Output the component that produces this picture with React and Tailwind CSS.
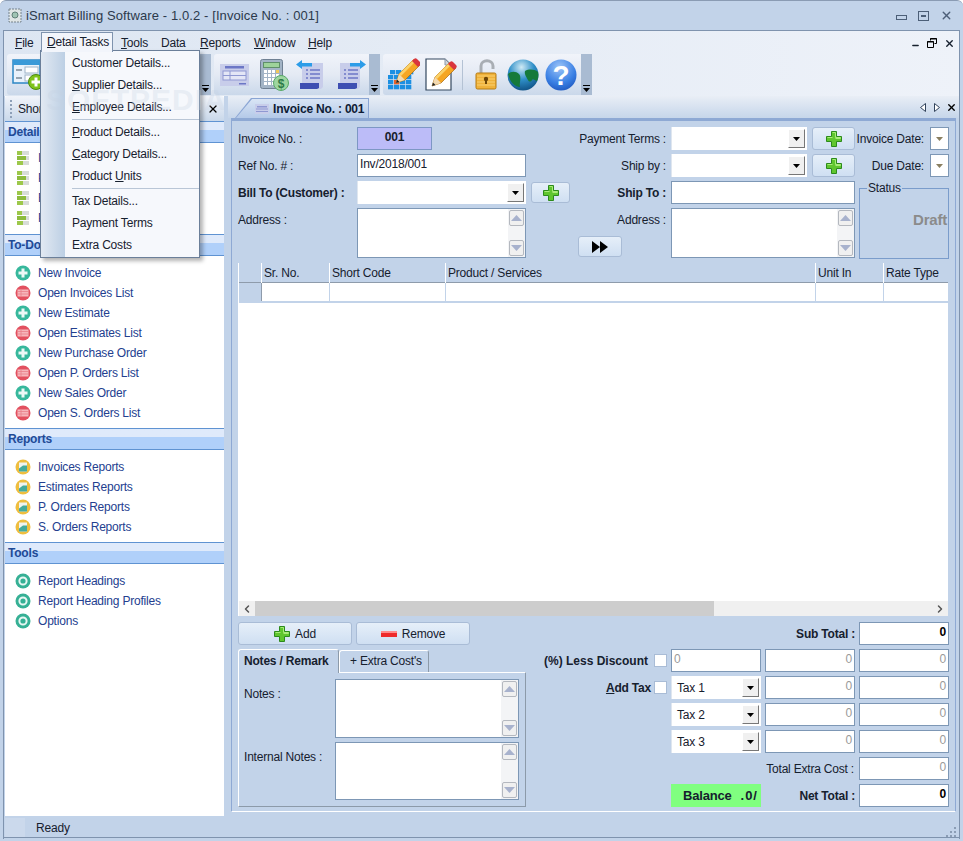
import React from 'react';
import { X, Minus, ChevronLeft, ChevronRight } from 'lucide-react';

const todoLinks = [
    ['plus', 'New Invoice'], ['list', 'Open Invoices List'],
    ['plus', 'New Estimate'], ['list', 'Open Estimates List'],
    ['plus', 'New Purchase Order'], ['list', 'Open P. Orders List'],
    ['plus', 'New Sales Order'], ['list', 'Open S. Orders List'],
];
const reportLinks = ['Invoices Reports', 'Estimates Reports', 'P. Orders Reports', 'S. Orders Reports'];
const toolLinks = ['Report Headings', 'Report Heading Profiles', 'Options'];
const detailLinks = ['Invoice Details', 'Product Details', 'Estimate Details', 'Payment Details'];

const inputCls = 'h-[23px] border border-[#7d97b5] bg-white text-[12px] leading-[18px] px-[2px]';
const btnCls = 'flex items-center justify-center rounded-[3px] border border-[#a9bcd6] bg-linear-to-b from-[#e6eff9] to-[#cfdff2]';

// ---- icons ----
const GreenPlus = ({ size = 16 }) => (
    <svg width={size} height={size} viewBox="0 0 16 16">
        <path d="M5.5 0.5h5v5h5v5h-5v5h-5v-5h-5v-5h5z" fill="#5fc62e" stroke="#2c8a1c" />
        <path d="M6.5 1.5h3v5h5v1h-5M1.5 6.5h5" fill="none" stroke="#a8ec78" />
    </svg>
);

const SideIcon = ({ kind }) => {
    if (kind === 'plus') return (
        <svg width="16" height="16" viewBox="0 0 16 16">
            <circle cx="8" cy="8" r="7.5" fill="#37b89c" />
            <path d="M6.5 3.5h3v3h3v3h-3v3h-3v-3h-3v-3h3z" fill="#eef9f6" />
        </svg>
    );
    if (kind === 'list') return (
        <svg width="16" height="16" viewBox="0 0 16 16">
            <circle cx="8" cy="8" r="7.5" fill="#e2505f" />
            <rect x="2.5" y="4.5" width="11" height="7" fill="#f6b6bb" />
            <path d="M2.5 6.5h11M2.5 9h11M6 4.5v7" stroke="#ea7f89" strokeWidth="0.8" />
        </svg>
    );
    if (kind === 'report') return (
        <svg width="16" height="16" viewBox="0 0 16 16">
            <circle cx="8" cy="8" r="7.5" fill="#efbe3e" />
            <rect x="4" y="3.5" width="8" height="9" fill="#f1f4ee" />
            <path d="M4 12.5v-3l4-3 4 0v6z" fill="#46ab9c" />
        </svg>
    );
    if (kind === 'gear') return (
        <svg width="16" height="16" viewBox="0 0 16 16">
            <circle cx="8" cy="8" r="7.5" fill="#36b095" />
            <circle cx="8" cy="8" r="3.6" fill="none" stroke="#e8f7f3" strokeWidth="2" />
            <circle cx="8" cy="8" r="1.5" fill="#36b095" />
        </svg>
    );
    return (
        <svg width="13" height="14" viewBox="0 0 13 14">
            <rect x="0" y="0" width="5" height="4" fill="#9dc84a" /><rect x="5" y="0" width="7" height="4" fill="#d8dcd8" />
            <rect x="0" y="5" width="9" height="4" fill="#8dbb3e" /><rect x="9" y="5" width="3" height="4" fill="#d8dcd8" />
            <rect x="0" y="10" width="6" height="4" fill="#9dc84a" /><rect x="6" y="10" width="6" height="4" fill="#d8dcd8" />
        </svg>
    );
};

const ComboArrow = () => (
    <span className="flex h-[19px] w-[17px] items-center justify-center border border-t-white border-l-white border-r-[#777] border-b-[#777] bg-[#f0f0f0]">
        <svg width="7" height="4" viewBox="0 0 7 4"><path d="M0 0h7L3.5 4z" fill="#000" /></svg>
    </span>
);

const Pencil = () => (
    <g>
        <path d="M8 28l3-9 15-15 6 6-15 15z" fill="#f5a623" stroke="#a86a10" strokeWidth="0.7" />
        <path d="M11 19l15-15 2 2-15 15z" fill="#fbd26a" />
        <path d="M24 6l2-2c1-1 2-1 3 0l3 3c1 1 1 2 0 3l-2 2z" fill="#d9363e" />
        <path d="M8 28l3-9 6 6z" fill="#f3d9b0" />
        <path d="M8 28l1-3.5 2.500 2.500z" fill="#222" />
    </g>
);

const ToolIcons = {
    newForm: (
        <svg width="34" height="32" viewBox="0 0 34 32">
            <rect x="1" y="1" width="27" height="23" fill="#e9f2fb" stroke="#2c86c4" strokeWidth="1.500" />
            <rect x="1" y="1" width="27" height="5" fill="#3a9ad8" />
            <rect x="13" y="8" width="13" height="6" fill="#fff" stroke="#9fb4c8" />
            <rect x="13" y="16" width="13" height="6" fill="#fff" stroke="#9fb4c8" />
            <path d="M4 11h6M4 19h6" stroke="#7c8b98" strokeWidth="1.500" />
            <circle cx="24" cy="23" r="7.500" fill="#7fc31c" stroke="#4d8a10" />
            <path d="M22.500 18.500h3v3h3v3h-3v3h-3v-3h-3v-3h3z" fill="#fff" />
        </svg>
    ),
    form: (
        <svg width="29" height="22" viewBox="0 0 29 22">
            <rect width="29" height="22" fill="#c8cdea" />
            <rect x="5" y="2" width="19" height="2.500" fill="#6c77c6" />
            <rect x="3" y="7" width="23" height="9" fill="#e4e6f6" stroke="#8f98d2" />
            <path d="M3 11.500h23M10 7v9" stroke="#8f98d2" />
            <rect x="19" y="19" width="7" height="1.500" fill="#6c77c6" />
        </svg>
    ),
    calc: (
        <svg width="29" height="32" viewBox="0 0 29 32">
            <rect x="0.500" y="0.500" width="22" height="29" rx="2" fill="#a3b4c6" stroke="#6f8093" />
            <rect x="3.500" y="3.500" width="16" height="5" fill="#9ed39a" stroke="#5f8f6a" />
            {[11, 15, 19, 23].map((y) => [4, 8, 12, 16].map((x) => (
                <rect key={`${x}-${y}`} x={x} y={y} width="3" height="3" fill={x === 16 && y === 11 ? '#f0c85a' : '#fff'} />
            )))}
            <circle cx="21" cy="24" r="7.500" fill="#9ed6a0" stroke="#58a868" />
            <text x="21" y="28.500" textAnchor="middle" fontSize="12" fontWeight="700" fill="#2c7a48" fontFamily="Liberation Sans, sans-serif">$</text>
        </svg>
    ),
    docLeft: (
        <svg width="28" height="30" viewBox="0 0 28 30">
            <path d="M6 3h21v24l-2 2H6z" fill="#c8cdea" />
            <path d="M10 10h2M14 10h10M10 14h2M14 14h10M10 18h2M14 18h10" stroke="#6c77c6" strokeWidth="1.600" />
            <path d="M4 23h19v5l-2 1H4z" fill="#3e4eb2" />
            <path d="M0 4.500L6 0v3h10v3.500H6V9z" fill="#2c9ce8" />
        </svg>
    ),
    docRight: (
        <svg width="28" height="30" viewBox="0 0 28 30">
            <path d="M2 3h20v24l-2 2H2z" fill="#c8cdea" />
            <path d="M6 10h2M10 10h10M6 14h2M10 14h10M6 18h2M10 18h10" stroke="#6c77c6" strokeWidth="1.600" />
            <path d="M0 23h19v5l-2 1H0z" fill="#3e4eb2" />
            <path d="M28 4.500L22 0v3H12v3.500h10V9z" fill="#2c9ce8" />
        </svg>
    ),
    gridPencil: (
        <svg width="32" height="33" viewBox="0 0 32 33">
            {[12, 17, 22, 27].map((y) => [0, 6, 12, 18].map((x) => (
                <rect key={`${x}-${y}`} x={x + (y === 12 ? 2 : 0)} y={y} width="5.300" height="4.300" fill="#1b8fe2" />
            )))}
            <rect x="6" y="22" width="5.300" height="4.300" fill="#e8622c" />
            <g transform="translate(0 -3)"><Pencil /></g>
        </svg>
    ),
    docPencil: (
        <svg width="32" height="33" viewBox="0 0 32 33">
            <path d="M1 1h19l6 6v25H1z" fill="#fff" stroke="#33475e" strokeWidth="1.200" />
            <path d="M20 1v6h6" fill="#cfd6de" stroke="#8b98a8" />
            <g transform="translate(-1 0)"><Pencil /></g>
        </svg>
    ),
    lock: (
        <svg width="22" height="31" viewBox="0 0 22 31">
            <path d="M6 15V7c0-7 12-7 12 0v3" fill="none" stroke="#a9aeb4" strokeWidth="3" />
            <rect x="1" y="14" width="20" height="16" rx="1.500" fill="#f0b23a" stroke="#b47a12" />
            <path d="M2 17h18M2 20h18M2 23h18M2 26h18" stroke="#f8d072" />
            <circle cx="11" cy="20" r="2.200" fill="#6d4506" />
            <rect x="10" y="20" width="2" height="5" fill="#6d4506" />
        </svg>
    ),
    globe: (
        <svg width="32" height="32" viewBox="0 0 32 32">
            <defs>
                <radialGradient id="sea" cx="45%" cy="25%" r="80%">
                    <stop offset="0" stopColor="#cfeaf5" /><stop offset="0.5" stopColor="#2f8fc8" /><stop offset="1" stopColor="#0d4d80" />
                </radialGradient>
            </defs>
            <circle cx="16" cy="16" r="15.500" fill="url(#sea)" />
            <path d="M1 15c3-3 8-3 11 0s0 9 1 13C8 28 3 23 1 15zM18 12c4-2 9-2 13 1 1 4 0 7-1 9-2 0-4-3-5-1s-3 2-4 0-4-6-3-9z" fill="#157a3a" />
        </svg>
    ),
    help: (
        <svg width="32" height="32" viewBox="0 0 32 32">
            <defs>
                <radialGradient id="blueball" cx="45%" cy="25%" r="85%">
                    <stop offset="0" stopColor="#9cc4f8" /><stop offset="0.6" stopColor="#3a80e4" /><stop offset="1" stopColor="#1a50b8" />
                </radialGradient>
            </defs>
            <circle cx="16" cy="16" r="15.500" fill="url(#blueball)" />
            <text x="16" y="26" textAnchor="middle" fontSize="28" fontWeight="700" fill="#fff" fontFamily="Liberation Sans, sans-serif">?</text>
        </svg>
    ),
};

// ---- small pieces ----
const U = ({ children }) => <span className="underline">{children}</span>;

const Toolbar = ({ className, children }) => (
    <div className={`flex h-[41px] ${className}`}>
        <div className="flex min-w-0 flex-1 items-center rounded-l-[3px] bg-linear-to-b from-[#f1f4fa] via-[#e4eaf4] to-[#cad8ea]">{children}</div>
        <div className="flex w-[11px] flex-col items-center justify-end bg-[#a9bbd2] pb-[3px]">
            <svg width="7" height="7" viewBox="0 0 7 7"><path d="M0 0h7v1H0zM0 3h7L3.500 7z" fill="#000" /></svg>
        </div>
    </div>
);

const Combo = ({ value, className = '' }) => (
    <div className={`flex h-[23px] items-center justify-between border-l border-[#dfe6ef] bg-white pr-[2px] text-[12px] ${className}`}>
        <span className="pl-[5px]">{value}</span>
        <ComboArrow />
    </div>
);

const ScrollArea = ({ className = '' }) => (
    <div className={`flex justify-end border border-[#7d97b5] bg-white ${className}`}>
        <div className="flex w-[17px] flex-col justify-between bg-[#f3f4f6] p-[1px]">
            {['M0 6L5.500 0 11 6z', 'M0 0h11L5.500 6z'].map((d) => (
                <span key={d} className="flex h-[16px] w-[15px] items-center justify-center rounded-[2px] border border-[#b4b8bf] bg-[#f0f0f0]">
                    <svg width="11" height="6" viewBox="0 0 11 6"><path d={d} fill="#a8b2cd" /></svg>
                </span>
            ))}
        </div>
    </div>
);

const SectionHead = ({ title }) => (
    <div className="relative h-[22px] border-y border-[#5f93d2] bg-linear-to-b from-[#dfeafb] from-40% to-[#b0d0fa] to-40% pl-[3px] text-[12px] font-bold leading-[21px] text-[#1f4a96]">
        {title}
    </div>
);

const SideLink = ({ kind, label }) => (
    <div className="flex h-[20px] items-center gap-[7px] pl-[10px] text-[12px] text-[#23408f]">
        <span className="flex w-[16px] justify-center"><SideIcon kind={kind} /></span>
        {label}
    </div>
);

const Num = ({ value = '0', strong }) => (
    <div className={`${inputCls} text-right ${strong ? 'font-bold text-black' : 'text-[#9a9a9a]'}`}>{value}</div>
);

const Check = () => <span className="h-[13px] w-[13px] border border-[#a9bcd6] bg-white" />;

const App = () => {
    return (
        <div className="relative flex h-[841px] w-[963px] flex-col overflow-hidden rounded-t-[6px] border-t border-[#8a9bb3] bg-[#c2d3e9] font-['Liberation_Sans',sans-serif] tracking-[-0.2px] text-[#16202e]">
            {/* title bar */}
            <div className="flex h-[29px] shrink-0 items-center pl-[8px] pr-[10px]">
                <svg width="14" height="15" viewBox="0 0 14 15">
                    <rect x="1" y="1" width="12" height="13" fill="#dfe5e6" stroke="#77838c" strokeDasharray="2 1" />
                    <circle cx="7" cy="7" r="3" fill="#9fc4b4" stroke="#5f7f78" />
                </svg>
                <span className="ml-[4px] text-[13px] tracking-[0.1px] text-[#2c3a4c]">iSmart Billing Software - 1.0.2 - [Invoice No. : 001]</span>
                <div className="ml-auto flex items-center gap-[11px] text-[#4c5f78]">
                    <span className="mt-[4px] h-[5px] w-[11px] border border-[#4c5f78]" />
                    <span className="flex h-[10px] w-[11px] items-center justify-center border border-[#4c5f78]"><span className="h-[2px] w-[5px] border border-[#4c5f78]" /></span>
                    <X size={13} strokeWidth={2.500} />
                </div>
            </div>

            <div className="mx-[3px] flex h-[809px] flex-col border-x border-t border-[#7f93ae]">
                {/* menu + toolbars */}
                <div className="h-[65px] shrink-0 bg-linear-to-r from-[#dde6f2] to-[#eef2f9]">
                    <div className="flex h-[23px] items-center pl-[11px] text-[12px]">
                        <span className="w-[32px]"><U>F</U>ile</span>
                        <span className="w-[74px]"><U>D</U>etail Tasks</span>
                        <span className="w-[40px]"><U>T</U>ools</span>
                        <span className="w-[39px]">Data</span>
                        <span className="w-[54px]"><U>R</U>eports</span>
                        <span className="w-[54px]"><U>W</U>indow</span>
                        <span><U>H</U>elp</span>
                        <div className="ml-auto flex items-center gap-[7px] pr-[4px] pt-[1px]">
                            <Minus size={9} strokeWidth={4} className="mt-[5px]" />
                            <svg width="10" height="10" viewBox="0 0 10 10">
                                <path d="M3.500 2.500V0.500h6v5h-2M0.500 3.500h6v6h-6z" fill="none" stroke="#000" />
                                <path d="M3 1h7M0 4h7" stroke="#000" />
                            </svg>
                            <X size={11} strokeWidth={3} />
                        </div>
                    </div>
                    <div className="flex gap-[3px] pl-[3px]">
                        <Toolbar className="w-[204px]"><span className="ml-[5px]">{ToolIcons.newForm}</span></Toolbar>
                        <Toolbar className="w-[166px]">
                            <span className="ml-[6px]">{ToolIcons.form}</span>
                            <span className="ml-[11px]">{ToolIcons.calc}</span>
                            <span className="ml-[7px]">{ToolIcons.docLeft}</span>
                            <span className="ml-[14px]">{ToolIcons.docRight}</span>
                        </Toolbar>
                        <Toolbar className="w-[209px]">
                            <span className="ml-[5px]">{ToolIcons.gridPencil}</span>
                            <span className="ml-[5px]">{ToolIcons.docPencil}</span>
                            <span className="ml-[5px] h-[30px] w-px bg-[#b4c2d4]" />
                            <span className="ml-[12px]">{ToolIcons.lock}</span>
                            <span className="ml-[10px]">{ToolIcons.globe}</span>
                            <span className="ml-[6px]">{ToolIcons.help}</span>
                        </Toolbar>
                    </div>
                </div>

                <div className="flex h-[720px] shrink-0">
                    {/* sidebar */}
                    <aside className="ml-px flex w-[219px] shrink-0 flex-col bg-white">
                        <div className="flex h-[25px] shrink-0 items-center rounded-t-[3px] bg-linear-to-b from-[#f1f4fa] to-[#c9d8ea] pl-[5px] pr-[5px] text-[12px]">
                            <span className="h-[18px] w-[2px] border-l-2 border-dotted border-[#8ea0b8]" />
                            <span className="ml-[6px]">Shortcuts</span>
                            <X size={12} strokeWidth={2.500} className="ml-auto text-black" />
                        </div>
                        <SectionHead title="Detail Tasks" />
                        <div className="pb-[6px] pt-[5px]">
                            {detailLinks.map((label) => <SideLink key={label} kind="bars" label={label} />)}
                        </div>
                        <SectionHead title="To-Do List" />
                        <div className="pb-[5px] pt-[7px]">
                            {todoLinks.map(([kind, label]) => <SideLink key={label} kind={kind} label={label} />)}
                        </div>
                        <SectionHead title="Reports" />
                        <div className="pb-[5px] pt-[7px]">
                            {reportLinks.map((label) => <SideLink key={label} kind="report" label={label} />)}
                        </div>
                        <SectionHead title="Tools" />
                        <div className="pt-[7px]">
                            {toolLinks.map((label) => <SideLink key={label} kind="gear" label={label} />)}
                        </div>
                    </aside>

                    {/* document area */}
                    <section className="ml-[4px] flex min-w-0 flex-1 flex-col">
                        <div className="flex h-[22px] shrink-0 items-end bg-linear-to-b from-[#e9eef6] to-[#c6d6ea] pl-[7px]">
                            <div className="h-[20px] w-[134px] bg-[#8aa5d4] pl-px pr-px pt-px [clip-path:polygon(16px_0,100%_0,100%_100%,0_100%)]">
                                <div className="flex h-full items-center bg-linear-to-b from-[#d9e5f5] to-[#b4c9e8] pl-[19px] text-[12px] font-bold text-[#0f1c36] [clip-path:polygon(16px_0,100%_0,100%_100%,0_100%)]">
                                    <svg width="14" height="10" viewBox="0 0 14 10" className="mr-[4px]">
                                        <rect width="14" height="10" fill="#c8cdea" />
                                        <rect x="2" y="2" width="10" height="1.500" fill="#8f98d2" />
                                        <path d="M1 5h12M1 7.500h12" stroke="#8f98d2" />
                                    </svg>
                                    Invoice No. : 001
                                </div>
                            </div>
                            <div className="ml-auto flex items-center gap-[4px] self-center pr-[2px] text-[#33445c]">
                                <svg width="6" height="9" viewBox="0 0 6 9"><path d="M5.500 0.500v8L0.500 4.500z" fill="#fff" stroke="#33445c" /></svg>
                                <svg width="6" height="9" viewBox="0 0 6 9" className="ml-[4px]"><path d="M0.500 0.500v8l5-4z" fill="#fff" stroke="#33445c" /></svg>
                                <X size={11} strokeWidth={3} className="ml-[2px] text-black" />
                            </div>
                        </div>

                        <div className="mx-[3px] mb-[4px] flex min-h-0 flex-1 flex-col border border-t-[3px] border-[#8ea9d4] border-b-white pb-[5px] pl-[6px] pr-[7px] pt-[6px] text-[12px]">
                            {/* form head */}
                            <div className="grid shrink-0 grid-cols-[119px_169px_145px_184px_94px] grid-rows-[23px_23px_23px_50px] gap-y-[4px] whitespace-nowrap">
                                <div className="self-center">Invoice No. :</div>
                                <div className="h-[23px] w-[75px] border border-[#7d97c4] bg-[#bcbcf8] text-center font-bold leading-[18px]">001</div>
                                <div className="self-center pr-[5px] text-right">Payment Terms :</div>
                                <div className="flex gap-[5px]">
                                    <Combo className="w-[136px]" />
                                    <div className={`${btnCls} h-[23px] w-[43px]`}><GreenPlus /></div>
                                </div>
                                <div className="flex items-center justify-end gap-[6px]">
                                    <span>Invoice Date:</span>
                                    <div className={`${inputCls} flex w-[19px] shrink-0 items-center justify-center`}><svg width="7" height="4" viewBox="0 0 7 4"><path d="M0 0h7L3.500 4z" fill="#8a7f60" /></svg></div>
                                </div>

                                <div className="self-center">Ref No. #  :</div>
                                <div className={inputCls}>Inv/2018/001</div>
                                <div className="self-center pr-[5px] text-right">Ship by :</div>
                                <div className="flex gap-[5px]">
                                    <Combo className="w-[136px]" />
                                    <div className={`${btnCls} h-[23px] w-[43px]`}><GreenPlus /></div>
                                </div>
                                <div className="flex items-center justify-end gap-[6px]">
                                    <span>Due Date:</span>
                                    <div className={`${inputCls} flex w-[19px] shrink-0 items-center justify-center`}><svg width="7" height="4" viewBox="0 0 7 4"><path d="M0 0h7L3.500 4z" fill="#8a7f60" /></svg></div>
                                </div>

                                <div className="self-center font-bold">Bill To (Customer) :</div>
                                <Combo />
                                <div className="flex items-center justify-between pl-[5px]">
                                    <div className={`${btnCls} h-[21px] w-[39px]`}><GreenPlus /></div>
                                    <span className="pr-[5px] font-bold">Ship To :</span>
                                </div>
                                <div className={inputCls} />
                                <fieldset className="row-span-2 ml-[4px] mt-[1px] h-[77px] border border-[#7a9ccb] pl-[7px]">
                                    <legend className="px-[1px] leading-[12px]">Status</legend>
                                    <div className="mt-[15px] overflow-hidden whitespace-nowrap pl-[46px] text-[15px] font-bold text-[#8b8b8b]">Draft</div>
                                </fieldset>

                                <div className="pt-[3px]">Address :</div>
                                <ScrollArea />
                                <div className="flex">
                                    <div className={`${btnCls} ml-[52px] -mr-[6px] mt-[28px] h-[21px] w-[44px] shrink-0`}>
                                        <svg width="16" height="12" viewBox="0 0 16 12"><path d="M0 0l8 6-8 6zM8 0l8 6-8 6z" fill="#000" /></svg>
                                    </div>
                                    <span className="ml-auto pr-[5px] pt-[3px]">Address :</span>
                                </div>
                                <ScrollArea />
                            </div>

                            {/* items table */}
                            <div className="mt-[5px] flex h-[353px] shrink-0 flex-col border-l border-white bg-white">
                                <div className="grid h-[20px] shrink-0 grid-cols-[23px_68px_116px_370px_68px_65px] border-b border-[#8e9bab] bg-[#c2d3e9] leading-[20px]">
                                    <span className="border-r border-white" />
                                    <span className="border-r border-white pl-[2px]">Sr. No.</span>
                                    <span className="border-r border-white pl-[2px]">Short Code</span>
                                    <span className="border-r border-white pl-[2px]">Product / Services</span>
                                    <span className="border-r border-white pl-[2px]">Unit In</span>
                                    <span className="pl-[2px]">Rate Type</span>
                                </div>
                                <div className="grid h-[20px] shrink-0 grid-cols-[23px_68px_116px_370px_68px_65px] border-b-2 border-[#c2d3e9]">
                                    <span className="border-r border-[#8e9bab] bg-[#c2d3e9]" />
                                    <span className="border-r border-[#c2d3e9]" />
                                    <span className="border-r border-[#c2d3e9]" />
                                    <span className="border-r border-[#c2d3e9]" />
                                    <span className="border-r border-[#c2d3e9]" />
                                    <span />
                                </div>
                                <div className="flex-1" />
                                <div className="flex h-[15px] shrink-0 items-center bg-[#f0f0f0] text-[#555]">
                                    <span className="flex w-[16px] justify-center"><ChevronLeft size={12} strokeWidth={3} /></span>
                                    <span className="h-full w-[459px] bg-[#cdcdcd]" />
                                    <span className="ml-auto flex w-[16px] justify-center"><ChevronRight size={12} strokeWidth={3} /></span>
                                </div>
                            </div>

                            {/* footer */}
                            <div className="mt-[6px] flex shrink-0">
                                <div className="w-[288px] shrink-0">
                                    <div className="flex gap-[4px]">
                                        <div className={`${btnCls} h-[23px] w-[114px] gap-[5px]`}><GreenPlus />Add</div>
                                        <div className={`${btnCls} h-[23px] w-[114px] gap-[5px]`}>
                                            <svg width="16" height="6" viewBox="0 0 16 6"><rect width="16" height="6" fill="#ee2a2a" /><rect width="16" height="2" fill="#ff8a8a" /></svg>
                                            Remove
                                        </div>
                                    </div>
                                    <div className="mt-[4px] flex items-end">
                                        <div className="z-10 -mb-px h-[24px] w-[101px] rounded-t-[3px] border border-b-0 border-t-white border-l-white border-r-[#8c9aa9] bg-[#c2d3e9] pl-[5px] font-bold leading-[22px]">Notes / Remark</div>
                                        <div className="h-[22px] w-[90px] rounded-t-[3px] border border-b-0 border-t-white border-l-white border-r-[#8c9aa9] pl-[10px] leading-[21px]">+ Extra Cost's</div>
                                    </div>
                                    <div className="grid h-[135px] grid-cols-[91px_184px] grid-rows-[59px_58px] gap-y-[4px] border border-t-white border-l-white border-r-[#8c9aa9] border-b-[#8c9aa9] pl-[5px] pt-[6px]">
                                        <span className="pt-[6px]">Notes :</span>
                                        <ScrollArea />
                                        <span className="pt-[6px]">Internal Notes :</span>
                                        <ScrollArea />
                                    </div>
                                </div>

                                <div className="grid flex-1 grid-cols-[141px_90px_90px_90px] grid-rows-[repeat(7,23px)] gap-[4px] content-start whitespace-nowrap">
                                    <div className="col-span-3 self-center text-right font-bold">Sub Total :</div>
                                    <Num strong />

                                    <div className="flex items-center justify-end gap-[6px] font-bold tracking-[0px]">(%) Less Discount <Check /></div>
                                    <div className={`${inputCls} text-[#9a9a9a]`}>0</div>
                                    <Num />
                                    <Num />

                                    <div className="flex items-center justify-end gap-[3px] font-bold"><span><U>A</U>dd Tax</span> <Check /></div>
                                    <Combo value="Tax 1" />
                                    <Num />
                                    <Num />

                                    <div />
                                    <Combo value="Tax 2" />
                                    <Num />
                                    <Num />

                                    <div />
                                    <Combo value="Tax 3" />
                                    <Num />
                                    <Num />

                                    <div className="col-span-3 self-center pr-px text-right">Total Extra Cost :</div>
                                    <Num />

                                    <div />
                                    <div className="flex h-[23px] items-center justify-between overflow-hidden bg-[#80ff80] pl-[12px] pr-[3px] text-[13px] font-bold">
                                        <span>Balance</span><span className="whitespace-nowrap tracking-[1px]">.0/</span>
                                    </div>
                                    <div className="self-center text-right font-bold">Net Total :</div>
                                    <Num strong />
                                </div>
                            </div>
                        </div>
                    </section>
                </div>

                {/* status bar */}
                <div className="flex h-[22px] shrink-0 items-center border-b border-[#7f93ae] pt-[2px] text-[12px]">
                    <span className="ml-px h-full w-[20px] bg-[#cbd9ec]" />
                    <span className="ml-[11px]">Ready</span>
                    <svg width="11" height="11" viewBox="0 0 11 11" className="ml-auto mr-[2px] mt-[8px]">
                        <path d="M8 1h2v2H8zM4 5h2v2H4zM8 5h2v2H8zM0 9h2v2H0zM4 9h2v2H4zM8 9h2v2H8z" fill="#8b9db5" />
                    </svg>
                </div>
            </div>

            {/* open Detail Tasks menu */}
            <div className="absolute left-[41px] top-[31px] z-30 h-[20px] w-[72px] border border-b-0 border-[#7f93ae] bg-[#f2f5fb] pl-[5px] text-[12px] leading-[19px]">
                <U>D</U>etail Tasks
            </div>
            <div className="absolute left-[40px] top-[49px] z-20 flex w-[160px] border border-[#6b7f99] bg-[#f6f8fc] text-[12px] shadow-[3px_3px_4px_rgba(0,0,0,0.3)]">
                <div className="w-[24px] shrink-0 bg-linear-to-r from-[#e2e9f2] to-[#bccfe4]" />
                <div className="flex-1 py-px">
                    <div className="flex h-[22px] items-center pl-[7px]">Customer Details...</div>
                    <div className="flex h-[22px] items-center pl-[7px]"><span><U>S</U>upplier Details...</span></div>
                    <div className="flex h-[22px] items-center pl-[7px]"><span><U>E</U>mployee Details...</span></div>
                    <div className="ml-[7px] my-px h-px border-t border-[#b9c6d6]" />
                    <div className="flex h-[22px] items-center pl-[7px]"><span><U>P</U>roduct Details...</span></div>
                    <div className="flex h-[22px] items-center pl-[7px]"><span><U>C</U>ategory Details...</span></div>
                    <div className="flex h-[22px] items-center pl-[7px]"><span>Product <U>U</U>nits</span></div>
                    <div className="ml-[7px] my-px h-px border-t border-[#b9c6d6]" />
                    <div className="flex h-[22px] items-center pl-[7px]">Tax Details...</div>
                    <div className="flex h-[22px] items-center pl-[7px]">Payment Terms</div>
                    <div className="flex h-[22px] items-center pl-[7px]">Extra Costs</div>
                </div>
            </div>
            {/* watermark over the menu */}
            <div className="pointer-events-none absolute left-[46px] top-[76px] z-40 text-[30px] font-bold tracking-[1px] text-[#c5d2e2]/30">SOFTPEDIA</div>
        </div>
    );
};

export default App;
